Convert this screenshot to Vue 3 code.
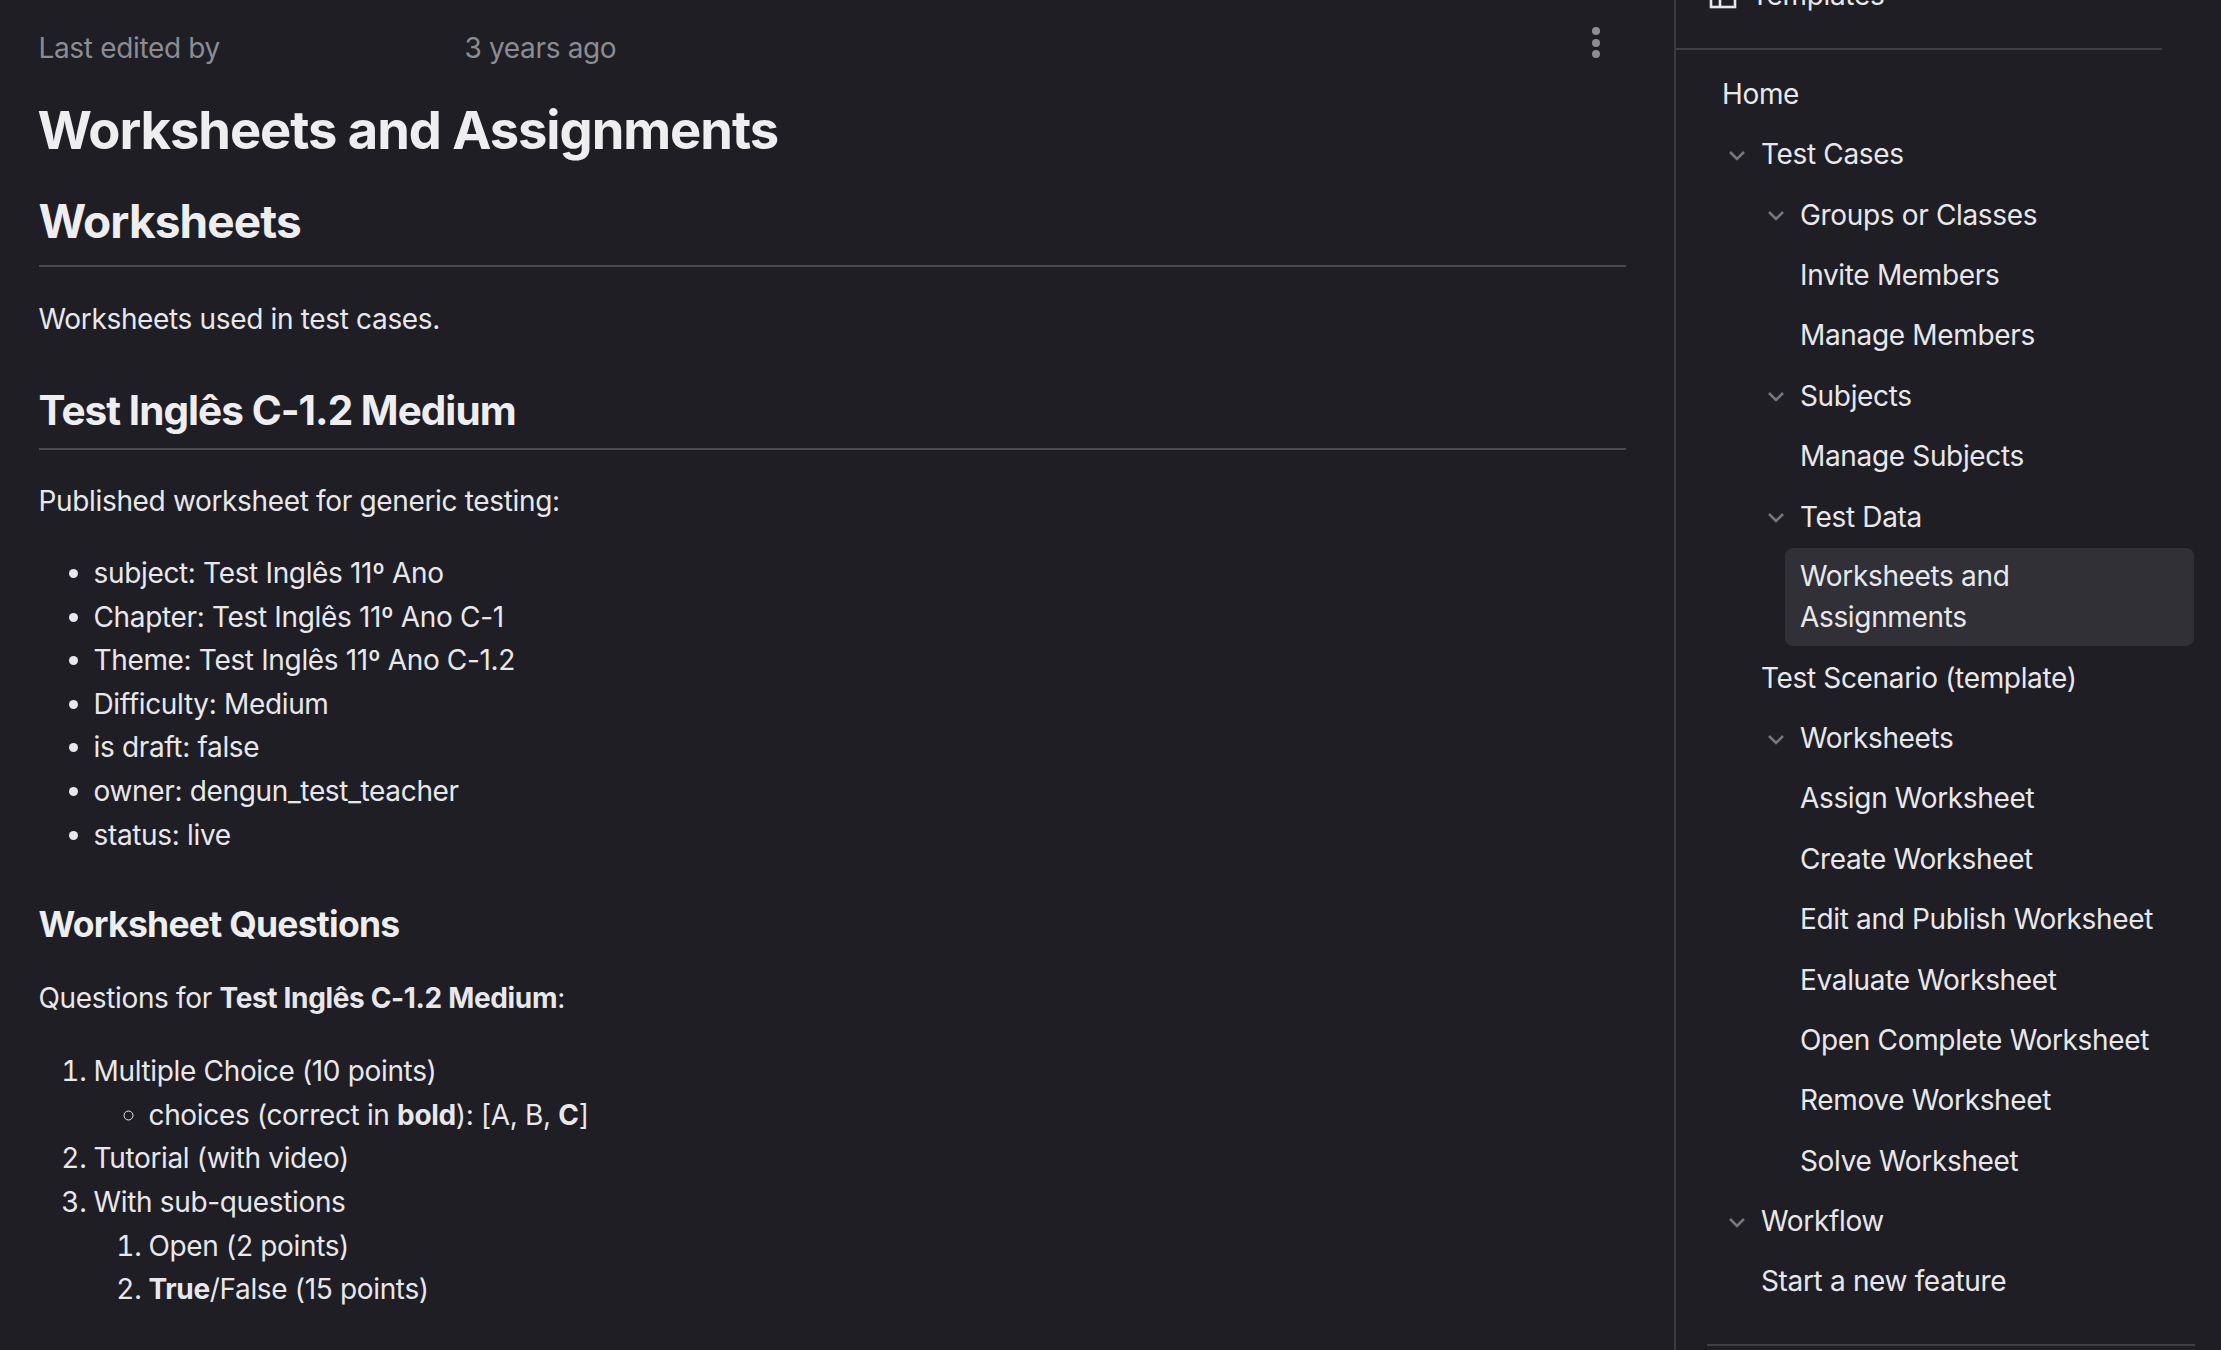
<script setup>
const details = [
  'subject: Test Inglês 11º Ano',
  'Chapter: Test Inglês 11º Ano C-1',
  'Theme: Test Inglês 11º Ano C-1.2',
  'Difficulty: Medium',
  'is draft: false',
  'owner: dengun_test_teacher',
  'status: live',
]

// depth: indentation level, open: shows a chevron
const tree = [
  { label: 'Home', depth: 0 },
  { label: 'Test Cases', depth: 1, open: true },
  { label: 'Groups or Classes', depth: 2, open: true },
  { label: 'Invite Members', depth: 2 },
  { label: 'Manage Members', depth: 2 },
  { label: 'Subjects', depth: 2, open: true },
  { label: 'Manage Subjects', depth: 2 },
  { label: 'Test Data', depth: 2, open: true },
  { label: 'Worksheets and Assignments', depth: 2, active: true },
  { label: 'Test Scenario (template)', depth: 1 },
  { label: 'Worksheets', depth: 2, open: true },
  { label: 'Assign Worksheet', depth: 2 },
  { label: 'Create Worksheet', depth: 2 },
  { label: 'Edit and Publish Worksheet', depth: 2 },
  { label: 'Evaluate Worksheet', depth: 2 },
  { label: 'Open Complete Worksheet', depth: 2 },
  { label: 'Remove Worksheet', depth: 2 },
  { label: 'Solve Worksheet', depth: 2 },
  { label: 'Workflow', depth: 1, open: true },
  { label: 'Start a new feature', depth: 1 },
]
</script>

<template>
  <div class="page">
    <main class="doc">
      <div class="meta">
        <span class="meta-by">Last edited by</span>
        <span>3 years ago</span>
        <button class="kebab" aria-label="More">
          <i></i><i></i><i></i>
        </button>
      </div>

      <h1>Worksheets and Assignments</h1>

      <h2>Worksheets</h2>
      <p>Worksheets used in test cases.</p>

      <h3>Test Inglês C-1.2 Medium</h3>
      <p class="after-h3">Published worksheet for generic testing:</p>
      <ul>
        <li v-for="item in details" :key="item">{{ item }}</li>
      </ul>

      <h4>Worksheet Questions</h4>
      <p class="after-h4">Questions for <strong>Test Inglês C-1.2 Medium</strong>:</p>
      <ol>
        <li>
          Multiple Choice (10 points)
          <ul>
            <li>choices (correct in <strong>bold</strong>): [A, B, <strong>C</strong>]</li>
          </ul>
        </li>
        <li>Tutorial (with video)</li>
        <li>
          With sub-questions
          <ol>
            <li>Open (2 points)</li>
            <li><strong>True</strong>/False (15 points)</li>
          </ol>
        </li>
      </ol>
    </main>

    <aside class="side">
      <div class="templates">
        <div class="templates-row">
          <svg width="28" height="28" viewBox="0 0 28 28" fill="none" stroke="currentColor" stroke-width="2.6">
            <rect x="2" y="2" width="24" height="24" />
            <path d="M2 10h24M11 10v16" />
          </svg>
          <span>Templates</span>
        </div>
      </div>
      <nav class="tree">
        <div
          v-for="node in tree"
          :key="node.label"
          class="node"
          :class="['depth-' + node.depth, { active: node.active }]"
        >
          <svg v-if="node.open" class="chev" width="18" height="11" viewBox="0 0 18 11" fill="none" stroke="currentColor" stroke-width="2.6">
            <path d="M2 2l7 7 7-7" />
          </svg>
          <span>{{ node.label }}</span>
        </div>
      </nav>
      <div class="side-rule"></div>
    </aside>
  </div>
</template>

<style>
html, body {
  margin: 0;
  background: #1e1e24;
  overflow: hidden;
}
</style>

<style scoped>
.page {
  display: flex;
  width: 2221px;
  height: 1350px;
  overflow: hidden;
  background: #1e1e24;
  color: #e8e8ec;
  font-family: Inter, "Liberation Sans", sans-serif;
  font-size: 28px;
  letter-spacing: -0.34px;
}

.doc {
  width: 1674px;
  flex: none;
  box-sizing: border-box;
  padding: 26px 48px 0 38.5px;
}

.meta {
  position: relative;
  display: flex;
  height: 44px;
  align-items: center;
  color: #8c8c93;
}

.meta-by {
  width: 426px;
}

.kebab {
  position: absolute;
  right: 26px;
  top: 1px;
  display: flex;
  flex-direction: column;
  gap: 3.5px;
  padding: 0;
  border: 0;
  background: none;
}

.kebab i {
  display: block;
  width: 8px;
  height: 8px;
  border-radius: 50%;
  background: #8c8c93;
}

h1, h2, h3, h4 {
  margin: 0;
  font-weight: 700;
  color: #eeeef1;
}

h1 {
  margin-top: 26px;
  margin-left: -1px;
  font-size: 52.5px;
  line-height: 68px;
  letter-spacing: -1.07px;
}

h2 {
  margin-top: 27px;
  padding-bottom: 14px;
  border-bottom: 2px solid #4a4a50;
  font-size: 46px;
  line-height: 60px;
  letter-spacing: -0.9px;
}

h3 {
  margin-top: 43px;
  padding-bottom: 9.5px;
  border-bottom: 2px solid #4a4a50;
  font-size: 40.5px;
  line-height: 54px;
  letter-spacing: -0.96px;
}

h4 {
  margin-top: 44.5px;
  font-size: 35.5px;
  line-height: 46px;
  letter-spacing: -0.75px;
}

p {
  margin: 30px 0 0;
  line-height: 44px;
}

p.after-h3 {
  margin-top: 29.5px;
}

p.after-h4 {
  margin-top: 28.5px;
}

strong {
  font-weight: 700;
}

ul, ol {
  margin: 29px 0 0;
  padding-left: 55px;
  line-height: 43.6px;
}

.after-h4 + ol {
  margin-top: 30px;
}

li ul, li ol {
  margin: 0;
}

.side {
  flex: 1;
  min-width: 0;
  border-left: 2px solid #3a3a40;
}

.templates {
  width: 486px;
  height: 48px;
  border-bottom: 2px solid #3f3f45;
  overflow: hidden;
  position: relative;
}

.templates-row {
  position: absolute;
  left: 33px;
  bottom: 36px;
  display: flex;
  align-items: center;
  gap: 14px;
  color: #e8e8ec;
}

.tree {
  padding: 14.5px 27px 0 0;
}

.node {
  position: relative;
  display: flex;
  align-items: flex-start;
  padding: 9.45px 15px;
  line-height: 41.5px;
}

.depth-0 {
  margin-left: 31px;
}

.depth-1 {
  margin-left: 70px;
}

.depth-2 {
  margin-left: 109px;
}

.node.active {
  margin-top: 0.5px;
  margin-bottom: 2.7px;
  padding-top: 7.5px;
  padding-bottom: 7px;
  background: #303036;
  border-radius: 8px;
}

.chev {
  position: absolute;
  left: -18px;
  top: 25px;
  color: #77777d;
}

.side-rule {
  width: 488px;
  height: 2px;
  margin: 31.5px 0 0 31px;
  background: #3f3f45;
}
</style>
